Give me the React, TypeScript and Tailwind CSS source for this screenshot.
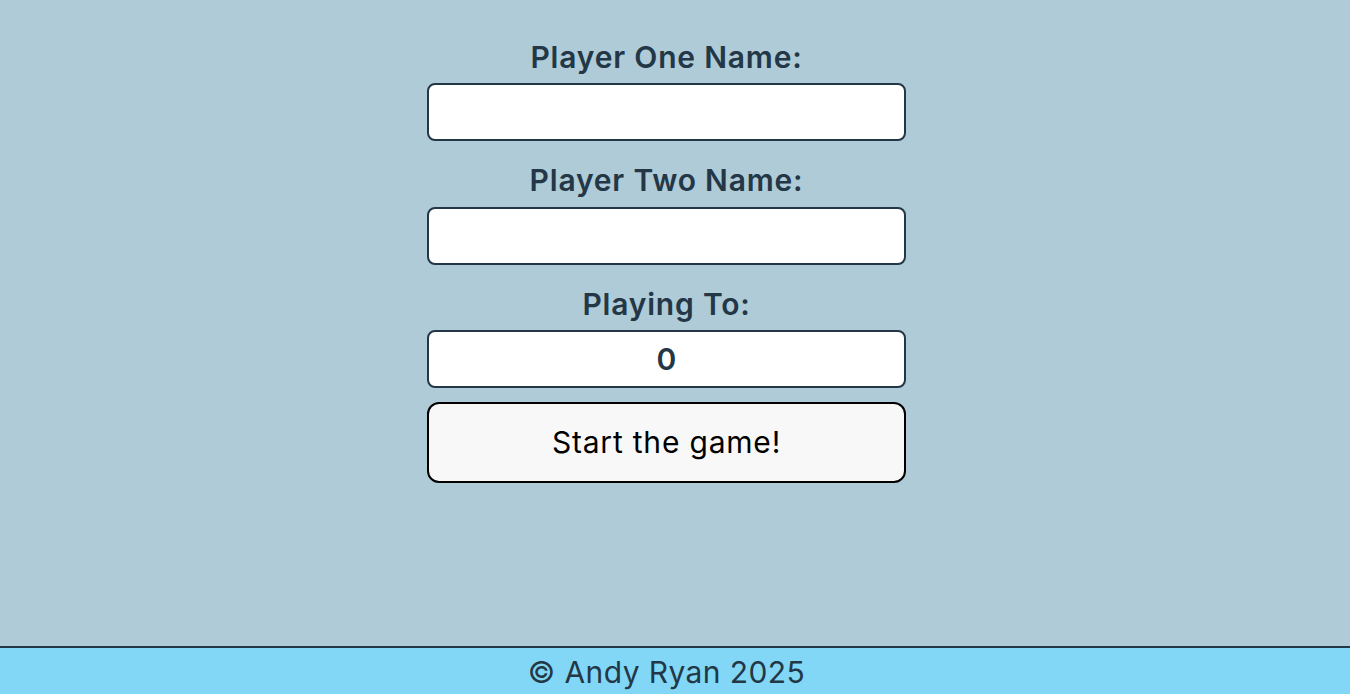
import React from "react";

export default function App() {
  return (
    <div
      className="flex min-h-[694px] flex-col bg-[#aecbd7] text-[#233746]"
      style={{ fontFamily: "Inter, 'Noto Sans', sans-serif" }}
    >
      <main className="flex flex-1 flex-col items-center pr-[17px] pt-[40px]">
        <div className="flex w-[479px] flex-col items-center">
          <label className="text-[30px] font-semibold leading-[34px] tracking-[0.8px]">Player One Name:</label>
          <input
            type="text"
            className="mt-[9px] h-[58px] w-full rounded-[8px] border-2 border-[#233746] bg-white px-3 text-center text-[30px] font-semibold outline-none"
          />
          <label className="mt-[22px] text-[30px] font-semibold leading-[34px] tracking-[0.8px]">Player Two Name:</label>
          <input
            type="text"
            className="mt-[10px] h-[58px] w-full rounded-[8px] border-2 border-[#233746] bg-white px-3 text-center text-[30px] font-semibold outline-none"
          />
          <label className="mt-[22px] text-[30px] font-semibold leading-[34px] tracking-[0.8px]">Playing To:</label>
          <input
            type="text"
            defaultValue="0"
            className="mt-[9px] h-[58px] w-full rounded-[8px] border-2 border-[#233746] bg-white px-3 text-center text-[30px] font-semibold text-[#233746] outline-none"
          />
          <button className="mt-[14px] h-[81px] w-full rounded-[12px] border-2 border-black bg-[#f8f8f8] text-[30px] font-normal tracking-[0.8px] text-black">
            Start the game!
          </button>
        </div>
      </main>
      <footer className="flex h-[48px] items-center justify-center border-t-2 border-[#233746] bg-[#81d7f5] pr-[17px] pt-[1px] text-[30px] leading-[34px] tracking-[0.4px]">
        © Andy Ryan 2025
      </footer>
    </div>
  );
}
